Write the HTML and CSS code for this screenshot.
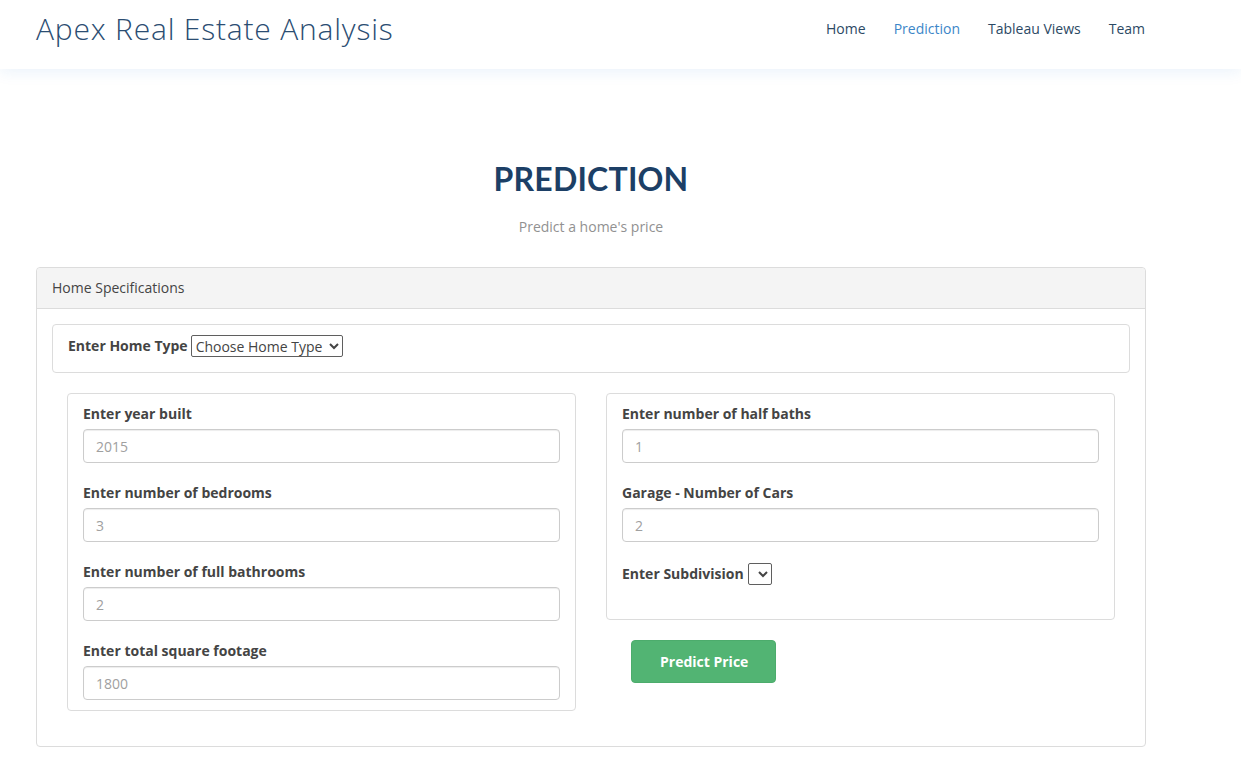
FILE: index.html
```html
<!DOCTYPE html>
<html lang="en">
<head>
<meta charset="utf-8">
<title>Apex Real Estate Analysis - Prediction</title>
<link rel="stylesheet" href="styles.css">
</head>
<body>
<header class="site-header">
  <div class="container header-inner">
    <div class="logo">Apex Real Estate Analysis</div>
    <nav class="nav">
      <a href="#" class="nav-link">Home</a>
      <a href="#" class="nav-link active">Prediction</a>
      <a href="#" class="nav-link">Tableau Views</a>
      <a href="#" class="nav-link">Team</a>
    </nav>
  </div>
</header>

<main class="container main">
  <div class="section-title">
    <h2>PREDICTION</h2>
    <p>Predict a home's price</p>
  </div>

  <div class="card">
    <div class="card-header">Home Specifications</div>
    <div class="card-body">
      <div class="type-box">
        <label class="inline-label" for="hometype">Enter Home Type</label>
        <select id="hometype" class="native-select type-select">
          <option>Choose Home Type</option>
        </select>
      </div>

      <div class="row">
        <div class="col">
          <div class="field-box">
            <div class="group">
              <label>Enter year built</label>
              <input type="text" placeholder="2015">
            </div>
            <div class="group">
              <label>Enter number of bedrooms</label>
              <input type="text" placeholder="3">
            </div>
            <div class="group">
              <label>Enter number of full bathrooms</label>
              <input type="text" placeholder="2">
            </div>
            <div class="group">
              <label>Enter total square footage</label>
              <input type="text" placeholder="1800">
            </div>
          </div>
        </div>
        <div class="col">
          <div class="field-box field-box-right">
            <div class="group">
              <label>Enter number of half baths</label>
              <input type="text" placeholder="1">
            </div>
            <div class="group">
              <label>Garage - Number of Cars</label>
              <input type="text" placeholder="2">
            </div>
            <div class="inline-group">
              <label class="inline-label" for="subdivision">Enter Subdivision</label>
              <select id="subdivision" class="native-select small-select"></select>
            </div>
          </div>
          <button class="btn-predict" type="button">Predict Price</button>
        </div>
      </div>
    </div>
  </div>
</main>
</body>
</html>
```

FILE: styles.css
```css
* { box-sizing: border-box; }

html, body {
  margin: 0;
  padding: 0;
  background: #fff;
  font-family: "Open Sans", "Liberation Sans", sans-serif;
  font-size: 14px;
  line-height: 20px;
  color: #444;
}

.container {
  width: 1110px;
  margin-left: 36px;
}

.site-header {
  height: 69px;
  background: #fff;
  box-shadow: 0 2px 15px rgba(25, 119, 204, 0.1);
  position: relative;
}

.header-inner {
  height: 69px;
  padding-bottom: 12px;
  display: flex;
  align-items: center;
  justify-content: space-between;
}

.logo {
  font-family: "Open Sans", sans-serif;
  font-weight: 300;
  font-size: 30px;
  line-height: 36px;
  color: #2b4d72;
  letter-spacing: 0.8px;
}

.nav {
  display: flex;
  gap: 28px;
  padding-right: 1px;
}

.nav-link {
  color: #2c4964;
  text-decoration: none;
  font-size: 14px;
  line-height: 20px;
}

.nav-link.active {
  color: #3c86c8;
}

.main {
  padding-top: 90px;
}

.section-title {
  text-align: center;
}

.section-title h2 {
  margin: 0;
  font-family: "Lato", "Open Sans", sans-serif;
  font-weight: 700;
  font-size: 32px;
  line-height: 40px;
  color: #1c3f66;
  letter-spacing: 0.2px;
}

.section-title p {
  margin: 18px 0 0;
  color: #919191;
  font-size: 14px;
  line-height: 20px;
}

.card {
  margin-top: 30px;
  border: 1px solid #dcdcdc;
  border-radius: 4px;
  margin-bottom: 20px;
}

.card-header {
  background: #f4f4f4;
  border-bottom: 1px solid #dcdcdc;
  padding: 10px 15px;
  line-height: 20px;
  border-radius: 4px 4px 0 0;
}

.card-body {
  padding: 15px 15px 35px;
}

.type-box {
  border: 1px solid #dcdcdc;
  border-radius: 4px;
  padding: 9px 15px 15px;
  height: 49px;
  display: flex;
  align-items: center;
  gap: 3px;
}

.inline-label {
  font-weight: 700;
  color: #444;
}

.native-select {
  font-family: "Open Sans", sans-serif;
  font-size: 14px;
  color: #444;
  height: 22px;
  border: 1px solid #5f5f5f;
  border-radius: 2px;
  background: #fff;
  padding: 0;
}

.type-select {
  width: 152px;
}

.small-select {
  width: 24px;
  height: 22px;
}

.row {
  margin-top: 20px;
  padding: 0 15px;
  display: grid;
  grid-template-columns: 1fr 1fr;
  gap: 30px;
}

.field-box {
  border: 1px solid #dcdcdc;
  border-radius: 4px;
  padding: 10px 15px;
  display: flex;
  flex-direction: column;
  gap: 20px;
}

.field-box-right {
  padding-bottom: 34px;
}

.group {
  display: flex;
  flex-direction: column;
  gap: 5px;
}

.group label {
  font-weight: 700;
  color: #444;
  line-height: 20px;
}

.group input {
  height: 34px;
  width: 100%;
  border: 1px solid #ccc;
  border-radius: 4px;
  padding: 6px 12px;
  font-family: "Open Sans", sans-serif;
  font-size: 14px;
  color: #555;
  box-shadow: inset 0 1px 1px rgba(0, 0, 0, 0.075);
}

.group input::placeholder {
  color: #a0a0a0;
}

.inline-group {
  display: flex;
  align-items: center;
  gap: 4px;
  height: 23px;
}

.btn-predict {
  margin: 20px 0 0 25px;
  background: #52b473;
  border: 1px solid #4cac6c;
  border-radius: 4px;
  color: #fff;
  font-family: "Open Sans", sans-serif;
  font-weight: 700;
  font-size: 14px;
  line-height: 21px;
  padding: 10px 27px 10px 28px;
  cursor: pointer;
}
```
